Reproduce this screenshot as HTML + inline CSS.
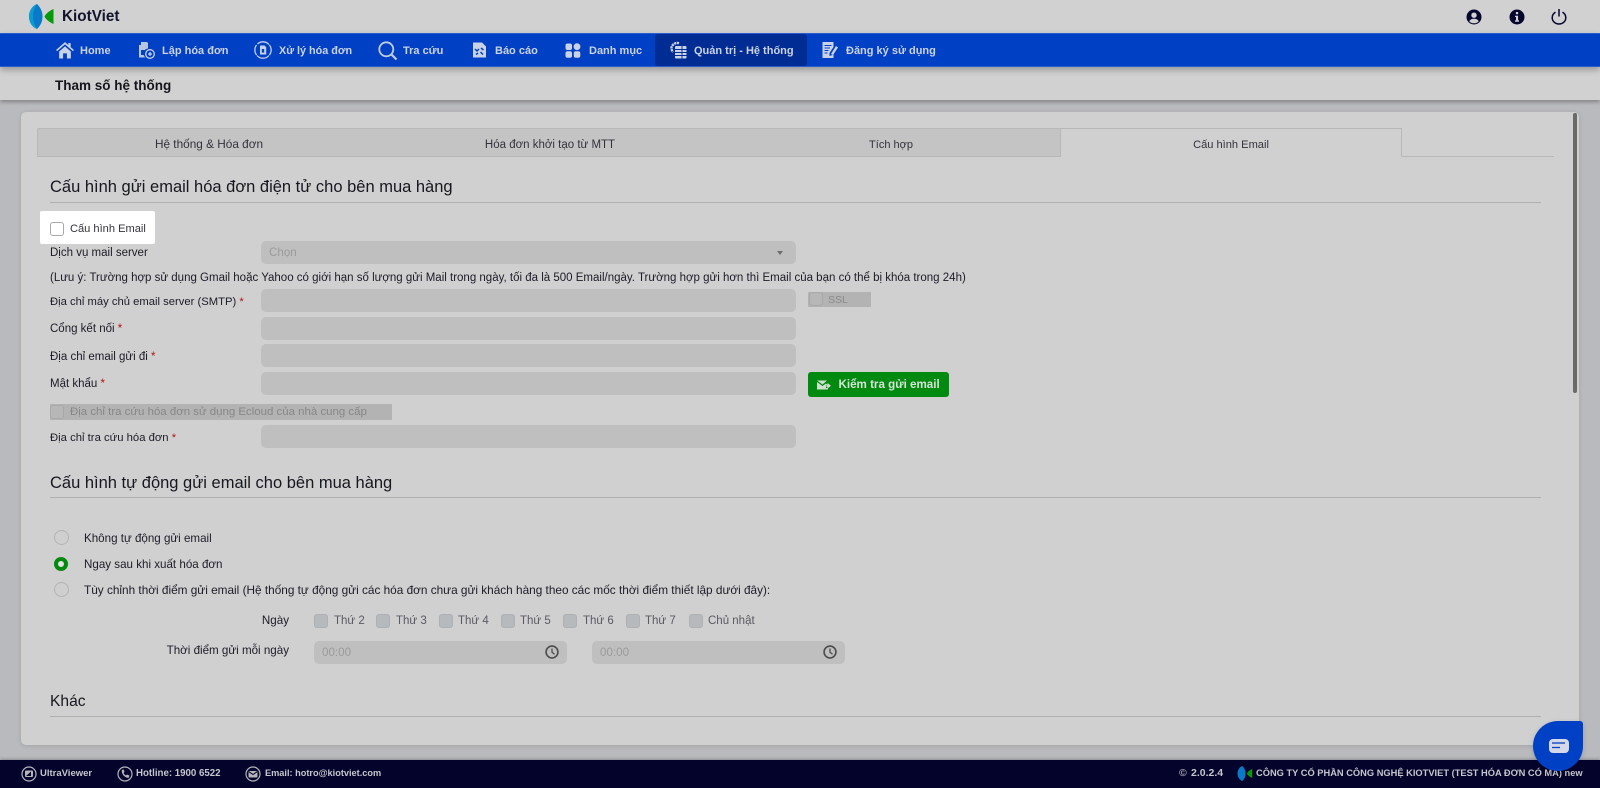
<!DOCTYPE html>
<html lang="vi"><head><meta charset="utf-8"><title>Tham số hệ thống</title>
<style>
*{box-sizing:border-box}
html,body{margin:0;padding:0}
html{background:#b9babd}
body{width:1600px;height:788px;overflow:hidden;position:relative;background:#b9babd;font-family:"Liberation Sans",sans-serif;font-size:11.6px;color:#1c1c28;filter:blur(.3px)}
.a{position:absolute;white-space:nowrap}
.t{position:absolute;white-space:nowrap;line-height:16px;height:16px}
.nav{font-weight:700;font-size:11px;color:#ccd3e4;line-height:16px;top:43px;position:absolute;white-space:nowrap}
.foot{font-weight:700;font-size:9.5px;color:#c6c6cc;line-height:14px;top:766px;position:absolute;white-space:nowrap}
.inp{position:absolute;left:261px;width:535px;height:23px;background:#bfbfbf;border-radius:5px}
.h{position:absolute;font-size:16.5px;line-height:22px;color:#17171f;white-space:nowrap}
.ln{position:absolute;left:50px;width:1491px;height:1px;background:#b0b0b0}
.cb{position:absolute;width:14px;height:14px;border-radius:3px;background:#b7babd;border:1px solid #aeb0b3}
.rd{position:absolute;left:54px;width:15px;height:15px;border-radius:50%;border:1.5px solid #b4b4b4;background:#cfcfcf}
.tab{position:absolute;top:128px;height:29px;line-height:34px;text-align:center;color:#33333c}
.d{color:#5a5a64;font-size:11.5px;top:613px}
.r{color:#b11414}
svg{position:absolute;display:block}
</style></head><body>

<!-- header -->
<div class="a" style="left:0;top:0;width:1600px;height:33px;background:#d1d1d1"></div>
<svg style="left:29px;top:4px" width="25" height="25" viewBox="0 0 25 25"><path d="M8 0C3 2 0 7 0 12.500C0 18 3 23 8 25C12 21 13.500 17 13.500 12.500C13.500 8 12 4 8 0Z" fill="#0a7ac8"/><path d="M8 0C3 2 0 7 0 12.500C0 18 3 23 8 25C5 20 4 16 4 12.500C4 9 5 5 8 0Z" fill="#0a9bd0"/><path d="M24.500 5V20C20 18 17 15.500 15.500 12.500C17 9.500 20 7 24.500 5Z" fill="#049a0c"/></svg>
<div class="a" style="left:62px;top:7px;font-size:15.3px;line-height:20px;font-weight:700;color:#14142b">KiotViet</div>

<svg style="left:1466px;top:9px" width="16" height="16" viewBox="0 0 16 16"><circle cx="8" cy="8" r="7.500" fill="#05052e"/><circle cx="8" cy="6.200" r="2.700" fill="#d1d1d1"/><path d="M3.300 12.200C4.500 10.300 6 9.800 8 9.800S11.500 10.300 12.700 12.200C11.500 13.700 9.800 14.300 8 14.300S4.500 13.700 3.300 12.200Z" fill="#d1d1d1"/></svg>
<svg style="left:1509px;top:9px" width="16" height="16" viewBox="0 0 16 16"><circle cx="8" cy="8" r="7.500" fill="#05052e"/><rect x="6.900" y="3" width="2.200" height="2.200" fill="#d1d1d1"/><path d="M6 6.700H9.100V11.400H10V12.800H6V11.400H7V8H6Z" fill="#d1d1d1"/></svg>
<svg style="left:1551px;top:8px" width="16" height="17" viewBox="0 0 16 17"><path d="M4.500 4.200C2.400 5.400 1.200 7.400 1.200 9.700C1.200 13.300 4.300 16 8 16S14.800 13.300 14.800 9.700C14.800 7.400 13.600 5.400 11.500 4.200" fill="none" stroke="#05052e" stroke-width="1.500"/><path d="M8 1V8.500" stroke="#05052e" stroke-width="1.500"/></svg>

<!-- nav -->
<div class="a" style="left:0;top:33px;width:1600px;height:34px;background:#0040c4;border-top:1px solid #2c5cd0;border-bottom:1px solid #2c5cd0;box-shadow:0 3px 6px rgba(0,0,0,.28);z-index:3"></div>
<div style="position:absolute;left:0;top:0;z-index:4">
<div class="a" style="left:655px;top:34px;width:152px;height:32px;background:#002c94;border-radius:3px"></div>

<svg style="left:56px;top:41px" width="18" height="18" viewBox="0 0 16 16"><path d="M0 8L8 1L11 3.600V1.800H13V5.400L16 8L15 9L8 3L1 9Z" fill="#c9d2e6"/><path d="M2.800 9.300L8 4.800L13.200 9.300V15.500H9.700V11H6.300V15.500H2.800Z" fill="#c9d2e6"/></svg>
<span class="nav" style="left:80px">Home</span>

<svg style="left:138px;top:42px" width="17" height="17" viewBox="0 0 17 17"><path d="M3 0H9L10 1V6.500A5 5 0 0 0 7.500 15.500H1V3H3Z" fill="#b9c6e0"/><rect x="3" y="8" width="3.500" height="5" fill="#0040c4"/><circle cx="12" cy="12" r="4.300" fill="#0040c4" stroke="#c9d2e6" stroke-width="1.300"/><path d="M10 12H14M12 10V14" stroke="#c9d2e6" stroke-width="1.300"/></svg>
<span class="nav" style="left:162px">Lập hóa đơn</span>

<svg style="left:254px;top:41px" width="18" height="18" viewBox="0 0 18 18"><path d="M3.500 3A8 8 0 0 1 15 3.500M15 14.500A8 8 0 0 1 3 14.500M2.600 14A8 8 0 0 1 2.600 4M15.400 4A8 8 0 0 1 15.400 14" fill="none" stroke="#c9d2e6" stroke-width="1.300"/><path d="M6 4.500H10.500L12.200 6.300V13.500H6Z" fill="#c9d2e6"/><rect x="7.800" y="8" width="2.400" height="3.600" fill="#0040c4"/></svg>
<span class="nav" style="left:279px;font-size:10.8px">Xử lý hóa đơn</span>

<svg style="left:378px;top:41px" width="20" height="20" viewBox="0 0 20 20"><circle cx="8.300" cy="8.300" r="7" fill="none" stroke="#c0cce4" stroke-width="1.800"/><path d="M13.300 13.300L18.500 18.500" stroke="#c0cce4" stroke-width="2.200"/></svg>
<span class="nav" style="left:403px">Tra cứu</span>

<svg style="left:472px;top:42px" width="15" height="16" viewBox="0 0 15 16"><path d="M1 0.500H10L14 4.500V15.500H1Z" fill="#c9d2e6"/><path d="M3 7L5 9L7 7M8.500 10L11 12.500M4 12.500L6 11M9 6L11.500 8" stroke="#0040c4" stroke-width="1.500" fill="none"/></svg>
<span class="nav" style="left:495px">Báo cáo</span>

<svg style="left:565px;top:43px" width="16" height="15" viewBox="0 0 16 15"><rect x="0.500" y="0.500" width="6.500" height="6.500" rx="2" fill="#c9d2e6"/><circle cx="12" cy="3.700" r="3.400" fill="#c9d2e6"/><rect x="0.500" y="8.300" width="6.500" height="6.500" rx="2" fill="#c9d2e6"/><rect x="8.800" y="8.300" width="6.500" height="6.500" rx="2" fill="#c9d2e6"/></svg>
<span class="nav" style="left:589px">Danh mục</span>

<svg style="left:670px;top:41px" width="17" height="18" viewBox="0 0 17 18"><path d="M9 2.200A6 6 0 0 0 1.500 6.500A6 6 0 0 0 3 11" fill="none" stroke="#c9d2e6" stroke-width="2.400" stroke-dasharray="2.200 .6"/><rect x="5" y="5" width="11.500" height="12.500" rx="1" fill="#c9d2e6"/><path d="M5 8.500H16.500M5 11.500H16.500M5 14.500H16.500M12 5V17.500" stroke="#002c94" stroke-width=".9"/></svg>
<span class="nav" style="left:694px">Quản trị - Hệ thống</span>

<svg style="left:822px;top:41px" width="17" height="18" viewBox="0 0 17 18"><path d="M0.500 1H11.500V6L7.500 12V15L10.500 14L11.500 12.500V17H0.500Z" fill="#c9d2e6"/><path d="M2.500 4.500H9.500M2.500 7H8M2.500 9.500H6.500M2.500 12H5.500" stroke="#0040c4" stroke-width="1"/><path d="M9 13L14 5L16 6.500L11 14Z" fill="#c9d2e6"/></svg>
<span class="nav" style="left:846px">Đăng ký sử dụng</span>
</div>

<!-- subheader -->
<div class="a" style="left:0;top:67px;width:1600px;height:33px;background:#d1d1d1;box-shadow:0 2px 4px rgba(0,0,0,.3);z-index:2"></div>
<div class="a" style="left:55px;top:77px;font-size:13.5px;line-height:18px;font-weight:700;color:#15151c;z-index:3">Tham số hệ thống</div>

<!-- card -->
<div class="a" style="left:21px;top:112px;width:1558px;height:633px;background:#d0d0d0;border-radius:5px;box-shadow:0 1px 5px rgba(0,0,0,.12)"></div>
<div class="a" style="left:1573px;top:113px;width:4px;height:280px;background:#6a6a6a;border-radius:2px"></div>

<!-- tabs -->
<div class="a" style="left:37px;top:128px;width:1024px;height:29px;background:#c4c4c4;border:1px solid #b8b8b8;border-radius:2px 0 0 0"></div>
<div class="a" style="left:1060px;top:128px;width:342px;height:29px;background:#d0d0d0;border:1px solid #b8b8b8;border-bottom:0"></div>
<div class="a" style="left:1402px;top:156px;width:152px;height:1px;background:#b8b8b8"></div>
<div class="tab" style="left:38px;width:342px;font-size:11.8px;line-height:32px">Hệ thống &amp; Hóa đơn</div>
<div class="tab" style="left:379px;width:342px;font-size:11.5px">Hóa đơn khởi tạo từ MTT</div>
<div class="tab" style="left:720px;width:342px;font-size:11px">Tích hợp</div>
<div class="tab" style="left:1060px;width:342px;font-size:11.1px">Cấu hình Email</div>

<!-- section 1 -->
<div class="h" style="left:50px;top:176px">Cấu hình gửi email hóa đơn điện tử cho bên mua hàng</div>
<div class="ln" style="top:202px"></div>

<div class="a" style="left:40px;top:211px;width:115px;height:33px;background:#fff;border-radius:2px"></div>
<div class="a" style="left:50px;top:222px;width:14px;height:14px;background:#fff;border:1px solid #a8a8a8;border-radius:3px"></div>
<div class="t" style="left:70px;top:221px;color:#33333c;font-size:11.1px">Cấu hình Email</div>

<div class="t" style="left:50px;top:245px;font-size:11.5px">Dịch vụ mail server</div>
<div class="inp" style="top:241px"></div>
<div class="t" style="left:269px;top:245px;color:#9b9b9b">Chọn</div>
<div class="a" style="left:777px;top:251px;width:0;height:0;border-left:3.500px solid transparent;border-right:3.500px solid transparent;border-top:4px solid #6e6e6e"></div>

<div class="t" style="left:50px;top:270px;font-size:11.5px">(Lưu ý: Trường hợp sử dụng Gmail hoặc Yahoo có giới hạn số lượng gửi Mail trong ngày, tối đa là 500 Email/ngày. Trường hợp gửi hơn thì Email của bạn có thể bị khóa trong 24h)</div>

<div class="t" style="left:50px;top:294px;font-size:11.25px">Địa chỉ máy chủ email server (SMTP) <span class="r">*</span></div>
<div class="inp" style="top:289px"></div>
<div class="a" style="left:808px;top:292px;width:63px;height:15px;background:#b3b3b3"></div>
<div class="cb" style="left:809px;top:292px;background:#b7b7b7;border-color:#a8a8a8"></div>
<div class="t" style="left:828px;top:292px;color:#8a8a8a;font-size:10.5px">SSL</div>

<div class="t" style="left:50px;top:321px;font-size:11.5px">Cổng kết nối <span class="r">*</span></div>
<div class="inp" style="top:317px"></div>
<div class="t" style="left:50px;top:349px;font-size:11.5px">Địa chỉ email gửi đi <span class="r">*</span></div>
<div class="inp" style="top:344px"></div>
<div class="t" style="left:50px;top:376px;font-size:11.5px">Mật khẩu <span class="r">*</span></div>
<div class="inp" style="top:372px"></div>

<div class="a" style="left:808px;top:372px;width:141px;height:25px;background:#008a10;border-radius:3px"></div>
<svg style="left:817px;top:380px" width="14" height="10" viewBox="0 0 14 10"><path d="M0 0.500H10L5.500 4.500Z" fill="#cfe0cf"/><path d="M0 2L5.500 6L9 3.500L10.500 5H9V8H11V9.500H0Z" fill="#cfe0cf"/><path d="M10.500 3L14 5.800L10.500 8.500V7H9.500V4.500H10.500Z" fill="#cfe0cf"/></svg>
<div class="t" style="left:838.500px;top:377px;font-weight:700;color:#d6e4d6;font-size:11.6px">Kiểm tra gửi email</div>

<div class="a" style="left:50px;top:404px;width:342px;height:16px;background:#b3b3b3"></div>
<div class="cb" style="left:50px;top:405px;background:#b7b7b7;border-color:#a8a8a8"></div>
<div class="t" style="left:70px;top:404px;color:#878787;font-size:11.45px">Địa chỉ tra cứu hóa đơn sử dụng Ecloud của nhà cung cấp</div>

<div class="t" style="left:50px;top:430px;font-size:11.3px">Địa chỉ tra cứu hóa đơn <span class="r">*</span></div>
<div class="inp" style="top:425px"></div>

<!-- section 2 -->
<div class="h" style="left:50px;top:472px">Cấu hình tự động gửi email cho bên mua hàng</div>
<div class="ln" style="top:497px"></div>

<div class="rd" style="top:530px"></div>
<div class="t" style="left:84px;top:531px">Không tự động gửi email</div>
<div class="a" style="left:54px;top:557px;width:14px;height:14px;border-radius:50%;border:4px solid #008a10;background:#e4e4e4"></div>
<div class="t" style="left:84px;top:557px">Ngay sau khi xuất hóa đơn</div>
<div class="rd" style="top:582px"></div>
<div class="t" style="left:84px;top:582px;font-size:11.8px">Tùy chỉnh thời điểm gửi email (Hệ thống tự động gửi các hóa đơn chưa gửi khách hàng theo các mốc thời điểm thiết lập dưới đây):</div>

<div class="t" style="right:1311px;top:613px">Ngày</div>
<div class="cb" style="left:314px;top:614px"></div><div class="t d" style="left:334px">Thứ 2</div>
<div class="cb" style="left:376px;top:614px"></div><div class="t d" style="left:396px">Thứ 3</div>
<div class="cb" style="left:439px;top:614px"></div><div class="t d" style="left:458px">Thứ 4</div>
<div class="cb" style="left:501px;top:614px"></div><div class="t d" style="left:520px">Thứ 5</div>
<div class="cb" style="left:563px;top:614px"></div><div class="t d" style="left:583px">Thứ 6</div>
<div class="cb" style="left:626px;top:614px"></div><div class="t d" style="left:645px">Thứ 7</div>
<div class="cb" style="left:689px;top:614px"></div><div class="t d" style="left:708px">Chủ nhật</div>

<div class="t" style="right:1311px;top:643px;font-size:11.6px">Thời điểm gửi mỗi ngày</div>
<div class="inp" style="left:314px;top:641px;width:253px"></div>
<div class="t" style="left:322px;top:645px;color:#9b9b9b">00:00</div>
<svg style="left:545px;top:645px" width="14" height="14" viewBox="0 0 13 13"><circle cx="6.500" cy="6.500" r="5.500" fill="none" stroke="#4d4d4d" stroke-width="1.500"/><path d="M6.500 3.200V6.700L8.800 8.600" fill="none" stroke="#4d4d4d" stroke-width="1.200"/></svg>
<div class="inp" style="left:592px;top:641px;width:253px"></div>
<div class="t" style="left:600px;top:645px;color:#9b9b9b">00:00</div>
<svg style="left:823px;top:645px" width="14" height="14" viewBox="0 0 13 13"><circle cx="6.500" cy="6.500" r="5.500" fill="none" stroke="#4d4d4d" stroke-width="1.500"/><path d="M6.500 3.200V6.700L8.800 8.600" fill="none" stroke="#4d4d4d" stroke-width="1.200"/></svg>

<div class="h" style="left:50px;top:691px;font-size:15.6px">Khác</div>
<div class="ln" style="top:716px"></div>

<!-- footer -->
<div class="a" style="left:0;top:760px;width:1600px;height:28px;background:#03032b;box-shadow:0 -1px 3px rgba(0,0,0,.25)"></div>
<svg style="left:21px;top:766px" width="16" height="16" viewBox="0 0 16 16"><circle cx="8" cy="8" r="7" fill="none" stroke="#b5b5bb" stroke-width="1.200"/><rect x="4" y="4.500" width="8" height="6.500" rx="1" fill="#b5b5bb"/><path d="M5 10L10 5.500V10Z" fill="#03032b"/></svg>
<span class="foot" style="left:40px;top:767px">UltraViewer</span>
<svg style="left:117px;top:766px" width="16" height="16" viewBox="0 0 16 16"><circle cx="8" cy="8" r="7" fill="none" stroke="#b5b5bb" stroke-width="1.200"/><path d="M5 3.800L6.800 3.500L7.500 6L6.500 7C7 8 8 9 9 9.500L10 8.500L12.300 9.500L12 11.500C9 13 3.500 8 5 3.800Z" fill="#b5b5bb"/></svg>
<span class="foot" style="left:136px;top:767px;font-size:9.7px">Hotline: 1900 6522</span>
<svg style="left:245px;top:766px" width="16" height="16" viewBox="0 0 16 16"><circle cx="8" cy="8" r="7" fill="none" stroke="#b5b5bb" stroke-width="1.200"/><rect x="3.500" y="5" width="9" height="6.500" rx="1" fill="#b5b5bb"/><path d="M3.800 5.700L8 8.500L12.200 5.700" stroke="#03032b" fill="none"/></svg>
<span class="foot" style="left:265px;font-size:9.2px">Email: hotro@kiotviet.com</span>

<span class="foot" style="left:1179px;color:#a9a9b0;font-size:10.5px">©</span>
<span class="foot" style="left:1191px;font-size:10.5px">2.0.2.4</span>
<svg style="left:1237px;top:766px" width="16" height="15" viewBox="0 0 25 25"><path d="M8 0C3 2 0 7 0 12.500C0 18 3 23 8 25C12 21 13.500 17 13.500 12.500C13.500 8 12 4 8 0Z" fill="#0a7ac8"/><path d="M24.500 5V20C20 18 17 15.500 15.500 12.500C17 9.500 20 7 24.500 5Z" fill="#049a0c"/></svg>
<span class="foot" style="left:1256px;font-size:9.3px">CÔNG TY CỔ PHẦN CÔNG NGHỆ KIOTVIET (TEST HÓA ĐƠN CÓ MÃ) new</span>

<!-- chat -->
<div class="a" style="left:1533px;top:721px;width:50px;height:50px;background:#0040c4;border-radius:25px 3px 25px 25px;box-shadow:0 2px 6px rgba(0,0,0,.15)"></div>
<svg style="left:1549px;top:739px" width="20" height="14" viewBox="0 0 20 14"><rect width="20" height="14" rx="4" fill="#d4d8e8"/><path d="M3 4H16" stroke="#0040c4" stroke-width="1.300"/><path d="M3 8.500H11" stroke="#0040c4" stroke-width="1.300"/></svg>
</body></html>
